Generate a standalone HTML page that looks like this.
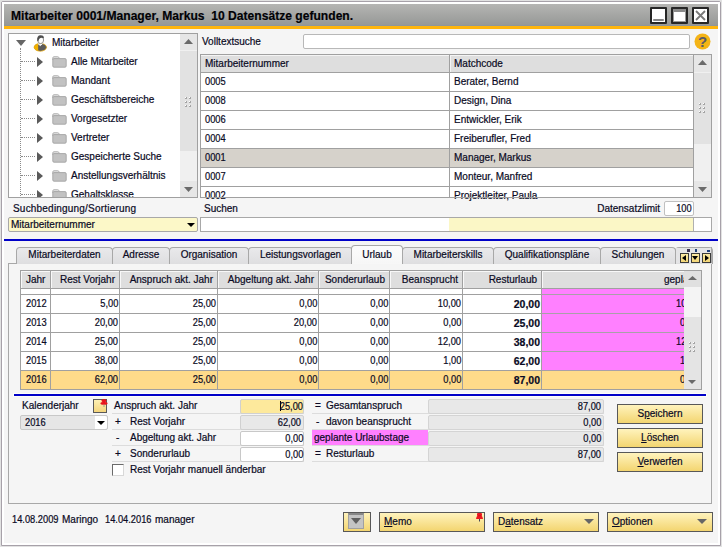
<!DOCTYPE html><html><head><meta charset="utf-8"><style>
*{box-sizing:border-box;margin:0;padding:0}
html,body{width:722px;height:547px;overflow:hidden;background:#e2e2e2;font-family:"Liberation Sans",sans-serif;font-size:10px;color:#0a0a24;-webkit-text-stroke:0.2px #0a0a24}
div,svg{position:absolute}
.t{white-space:nowrap;line-height:12px}
.r{text-align:right}
.b{font-weight:bold}
.box{border:1px solid #a0a0a0;background:#fff}
.hl{height:1px;background:#a0a0a0}
.vl{width:1px;background:#a0a0a0}
.tab{height:17px;border:1px solid #a8a8a8;border-bottom:none;border-radius:4px 4px 0 0;background:linear-gradient(#e9e9eb,#dedee0);text-align:center;line-height:12px;padding-top:1px;white-space:nowrap}
.btn{border:1px solid #585858;background:linear-gradient(#fff3bd,#f3d570);line-height:17px;white-space:nowrap}
.u{text-decoration:underline}
.n{transform:scaleX(0.93);transform-origin:100% 0}
.nl{transform:scaleX(0.93);transform-origin:0 0}
.grip{width:6px;height:9px;background:radial-gradient(circle at 1px 1px,#a8a8a8 0.9px,transparent 1.1px) 0 0/4px 4px}
</style></head><body>
<div style="left:1px;top:1px;width:720px;height:545px;border:1px solid #a7a1a9;background:#f5f5f5;border-radius:2px 2px 0 0"></div>
<div style="left:2px;top:2px;width:718px;height:543px;border:2px solid #fff"></div>
<div style="left:4px;top:4px;width:714px;height:22px;background:linear-gradient(#b5b5b3,#959795)"></div>
<div style="left:4px;top:25px;width:714px;height:1px;background:#8f969a"></div>
<div style="left:4px;top:26px;width:714px;height:3px;background:#ffb50d"></div>
<div class="t" style="left:11px;top:9px;font-weight:bold;font-size:12.1px;color:#000;line-height:15px">Mitarbeiter 0001/Manager, Markus&nbsp; 10 Datensätze gefunden.</div>
<div style="left:650px;top:7px;width:17px;height:17px;border:2px solid #262626;background:#fff;border-radius:1px"></div>
<div style="left:671px;top:7px;width:17px;height:17px;border:2px solid #262626;background:#fff;border-radius:1px"></div>
<div style="left:692px;top:7px;width:17px;height:17px;border:2px solid #262626;background:#fff;border-radius:1px"></div>
<div style="left:653px;top:19px;width:11px;height:2px;background:#858585;border-radius:1px"></div>
<div style="left:673px;top:9px;width:13px;height:13px;border:1px solid #999;border-top:3px solid #8a8a8a;background:#fff"></div>
<svg style="left:695px;top:10px" width="11" height="11"><path d="M1 1L10 10M10 1L1 10" stroke="#7a7a7a" stroke-width="1.8"/></svg>
<div style="left:8px;top:33px;width:190px;height:165px;border:1px solid #a0a0a0;background:#fff"></div>
<div style="left:180px;top:34px;width:17px;height:163px;background:#f0f0f0"></div>
<div style="left:180px;top:34px;width:17px;height:16px;background:#e6e6e6"></div>
<div style="left:180px;top:51px;width:17px;height:100px;background:#e2e2e2"></div>
<div style="left:180px;top:181px;width:17px;height:16px;background:#e6e6e6"></div>
<svg style="left:184px;top:39px" width="9" height="5"><path d="M0 5H9L4.5 0Z" fill="#6a6a6a"/></svg>
<svg style="left:184px;top:187px" width="9" height="5"><path d="M0 0H9L4.5 5Z" fill="#6a6a6a"/></svg>
<svg style="left:185px;top:97px" width="6" height="10"><rect x="0" y="0" width="2" height="2" fill="#a4a4a4"/><rect x="0" y="0" width="1" height="1" fill="#fff"/><rect x="4" y="0" width="2" height="2" fill="#a4a4a4"/><rect x="4" y="0" width="1" height="1" fill="#fff"/><rect x="0" y="4" width="2" height="2" fill="#a4a4a4"/><rect x="0" y="4" width="1" height="1" fill="#fff"/><rect x="4" y="4" width="2" height="2" fill="#a4a4a4"/><rect x="4" y="4" width="1" height="1" fill="#fff"/><rect x="0" y="8" width="2" height="2" fill="#a4a4a4"/><rect x="0" y="8" width="1" height="1" fill="#fff"/><rect x="4" y="8" width="2" height="2" fill="#a4a4a4"/><rect x="4" y="8" width="1" height="1" fill="#fff"/></svg>
<div style="left:9px;top:34px;width:171px;height:163px;overflow:hidden">
<svg style="left:7px;top:6px" width="10" height="6"><path d="M0 0H10L5.0 6Z" fill="#666"/></svg>
<div style="left:11px;top:14px;width:1px;height:160px;border-left:1px dotted #8a8a8a"></div>
<svg style="left:24px;top:0px" width="15" height="18"><defs><clipPath id="cl"><rect x="0" y="0" width="5.2" height="18"/></clipPath></defs><ellipse cx="7.3" cy="13.3" rx="6.2" ry="3.9" fill="#5c5c5c" stroke="#e9a800" stroke-width="0.7"/><ellipse cx="7.3" cy="13.3" rx="6.2" ry="3.9" fill="#f2b000" clip-path="url(#cl)"/><path d="M5 9.6L7.3 11.6 9.6 9.6" fill="#fff" stroke="#fff"/><ellipse cx="7.6" cy="6" rx="3" ry="3.6" fill="#fff" stroke="#777" stroke-width="0.8"/><path d="M4.3 6.8Q3.6 1.2 7.6 1.2Q11.4 1.2 10.8 4.6Q8.6 3 6.6 4.4Q5.6 5.2 5.3 7.6Z" fill="#4e4e4e"/></svg>
<div class="t" style="left:43px;top:3px;">Mitarbeiter</div>
<div style="left:12px;top:27px;width:14px;height:1px;border-top:1px dotted #8a8a8a"></div>
<svg style="left:28px;top:23px" width="6" height="10"><path d="M0 0V10L6 5.0Z" fill="#5a5a5a"/></svg>
<svg style="left:43px;top:22px" width="15" height="12"><path d="M0.8 4V2Q0.8 0.8 2 0.8H5.8Q6.8 0.8 7 1.8L7.2 2.6" fill="none" stroke="#9e9e9e" stroke-width="0.9"/><path d="M1.6 1.6H6V2.8H1.6Z" fill="#c4c4c4"/><rect x="0.8" y="2.6" width="13.4" height="8.6" rx="1.2" fill="#c2c2c2" stroke="#a4a4a4" stroke-width="0.9"/></svg>
<div class="t" style="left:62px;top:22px;">Alle Mitarbeiter</div>
<div style="left:12px;top:46px;width:14px;height:1px;border-top:1px dotted #8a8a8a"></div>
<svg style="left:28px;top:42px" width="6" height="10"><path d="M0 0V10L6 5.0Z" fill="#5a5a5a"/></svg>
<svg style="left:43px;top:41px" width="15" height="12"><path d="M0.8 4V2Q0.8 0.8 2 0.8H5.8Q6.8 0.8 7 1.8L7.2 2.6" fill="none" stroke="#9e9e9e" stroke-width="0.9"/><path d="M1.6 1.6H6V2.8H1.6Z" fill="#c4c4c4"/><rect x="0.8" y="2.6" width="13.4" height="8.6" rx="1.2" fill="#c2c2c2" stroke="#a4a4a4" stroke-width="0.9"/></svg>
<div class="t" style="left:62px;top:41px;">Mandant</div>
<div style="left:12px;top:65px;width:14px;height:1px;border-top:1px dotted #8a8a8a"></div>
<svg style="left:28px;top:61px" width="6" height="10"><path d="M0 0V10L6 5.0Z" fill="#5a5a5a"/></svg>
<svg style="left:43px;top:60px" width="15" height="12"><path d="M0.8 4V2Q0.8 0.8 2 0.8H5.8Q6.8 0.8 7 1.8L7.2 2.6" fill="none" stroke="#9e9e9e" stroke-width="0.9"/><path d="M1.6 1.6H6V2.8H1.6Z" fill="#c4c4c4"/><rect x="0.8" y="2.6" width="13.4" height="8.6" rx="1.2" fill="#c2c2c2" stroke="#a4a4a4" stroke-width="0.9"/></svg>
<div class="t" style="left:62px;top:60px;">Geschäftsbereiche</div>
<div style="left:12px;top:84px;width:14px;height:1px;border-top:1px dotted #8a8a8a"></div>
<svg style="left:28px;top:80px" width="6" height="10"><path d="M0 0V10L6 5.0Z" fill="#5a5a5a"/></svg>
<svg style="left:43px;top:79px" width="15" height="12"><path d="M0.8 4V2Q0.8 0.8 2 0.8H5.8Q6.8 0.8 7 1.8L7.2 2.6" fill="none" stroke="#9e9e9e" stroke-width="0.9"/><path d="M1.6 1.6H6V2.8H1.6Z" fill="#c4c4c4"/><rect x="0.8" y="2.6" width="13.4" height="8.6" rx="1.2" fill="#c2c2c2" stroke="#a4a4a4" stroke-width="0.9"/></svg>
<div class="t" style="left:62px;top:79px;">Vorgesetzter</div>
<div style="left:12px;top:103px;width:14px;height:1px;border-top:1px dotted #8a8a8a"></div>
<svg style="left:28px;top:99px" width="6" height="10"><path d="M0 0V10L6 5.0Z" fill="#5a5a5a"/></svg>
<svg style="left:43px;top:98px" width="15" height="12"><path d="M0.8 4V2Q0.8 0.8 2 0.8H5.8Q6.8 0.8 7 1.8L7.2 2.6" fill="none" stroke="#9e9e9e" stroke-width="0.9"/><path d="M1.6 1.6H6V2.8H1.6Z" fill="#c4c4c4"/><rect x="0.8" y="2.6" width="13.4" height="8.6" rx="1.2" fill="#c2c2c2" stroke="#a4a4a4" stroke-width="0.9"/></svg>
<div class="t" style="left:62px;top:98px;">Vertreter</div>
<div style="left:12px;top:122px;width:14px;height:1px;border-top:1px dotted #8a8a8a"></div>
<svg style="left:28px;top:118px" width="6" height="10"><path d="M0 0V10L6 5.0Z" fill="#5a5a5a"/></svg>
<svg style="left:43px;top:117px" width="15" height="12"><path d="M0.8 4V2Q0.8 0.8 2 0.8H5.8Q6.8 0.8 7 1.8L7.2 2.6" fill="none" stroke="#9e9e9e" stroke-width="0.9"/><path d="M1.6 1.6H6V2.8H1.6Z" fill="#c4c4c4"/><rect x="0.8" y="2.6" width="13.4" height="8.6" rx="1.2" fill="#c2c2c2" stroke="#a4a4a4" stroke-width="0.9"/></svg>
<div class="t" style="left:62px;top:117px;">Gespeicherte Suche</div>
<div style="left:12px;top:141px;width:14px;height:1px;border-top:1px dotted #8a8a8a"></div>
<svg style="left:28px;top:137px" width="6" height="10"><path d="M0 0V10L6 5.0Z" fill="#5a5a5a"/></svg>
<svg style="left:43px;top:136px" width="15" height="12"><path d="M0.8 4V2Q0.8 0.8 2 0.8H5.8Q6.8 0.8 7 1.8L7.2 2.6" fill="none" stroke="#9e9e9e" stroke-width="0.9"/><path d="M1.6 1.6H6V2.8H1.6Z" fill="#c4c4c4"/><rect x="0.8" y="2.6" width="13.4" height="8.6" rx="1.2" fill="#c2c2c2" stroke="#a4a4a4" stroke-width="0.9"/></svg>
<div class="t" style="left:62px;top:136px;">Anstellungsverhältnis</div>
<div style="left:12px;top:160px;width:14px;height:1px;border-top:1px dotted #8a8a8a"></div>
<svg style="left:28px;top:156px" width="6" height="10"><path d="M0 0V10L6 5.0Z" fill="#5a5a5a"/></svg>
<svg style="left:43px;top:155px" width="15" height="12"><path d="M0.8 4V2Q0.8 0.8 2 0.8H5.8Q6.8 0.8 7 1.8L7.2 2.6" fill="none" stroke="#9e9e9e" stroke-width="0.9"/><path d="M1.6 1.6H6V2.8H1.6Z" fill="#c4c4c4"/><rect x="0.8" y="2.6" width="13.4" height="8.6" rx="1.2" fill="#c2c2c2" stroke="#a4a4a4" stroke-width="0.9"/></svg>
<div class="t" style="left:62px;top:155px;">Gehaltsklasse</div>
</div>
<div class="t" style="left:202px;top:36px;">Volltextsuche</div>
<div style="left:303px;top:34px;width:387px;height:15px;border:1px solid #b8b8b8;background:#fff;border-radius:2px"></div>
<svg style="left:694px;top:33px" width="17" height="17"><circle cx="8.5" cy="8.5" r="8" fill="#f4b417"/><text x="8.6" y="14" text-anchor="middle" font-family="Liberation Sans" font-weight="bold" font-size="15" fill="#5a5a68" style="-webkit-text-stroke:0">?</text></svg>
<div style="left:200px;top:54px;width:512px;height:144px;border:1px solid #a0a0a0;background:#fff"></div>
<div style="left:201px;top:55px;width:493px;height:17px;background:#dedede;border-top:1px solid #f4f4f4"></div>
<div style="left:450px;top:55px;width:1px;height:17px;background:#f4f4f4"></div>
<div style="left:449px;top:55px;width:1px;height:142px;background:#a0a0a0"></div>
<div style="left:201px;top:72px;width:493px;height:1px;background:#a0a0a0"></div>
<div class="t" style="left:205px;top:58px;">Mitarbeiternummer</div>
<div class="t" style="left:454px;top:58px;">Matchcode</div>
<div style="left:201px;top:91px;width:493px;height:1px;background:#a0a0a0"></div>
<div class="t" style="left:205px;top:76px;transform:scaleX(0.93);transform-origin:0 0">0005</div>
<div class="t" style="left:454px;top:76px;">Berater, Bernd</div>
<div style="left:201px;top:110px;width:493px;height:1px;background:#a0a0a0"></div>
<div class="t" style="left:205px;top:95px;transform:scaleX(0.93);transform-origin:0 0">0008</div>
<div class="t" style="left:454px;top:95px;">Design, Dina</div>
<div style="left:201px;top:129px;width:493px;height:1px;background:#a0a0a0"></div>
<div class="t" style="left:205px;top:114px;transform:scaleX(0.93);transform-origin:0 0">0006</div>
<div class="t" style="left:454px;top:114px;">Entwickler, Erik</div>
<div style="left:201px;top:148px;width:493px;height:1px;background:#a0a0a0"></div>
<div class="t" style="left:205px;top:133px;transform:scaleX(0.93);transform-origin:0 0">0004</div>
<div class="t" style="left:454px;top:133px;">Freiberufler, Fred</div>
<div style="left:201px;top:149px;width:493px;height:18px;background:#d6d2cb"></div>
<div style="left:449px;top:149px;width:1px;height:18px;background:#a0a0a0"></div>
<div style="left:201px;top:167px;width:493px;height:1px;background:#a0a0a0"></div>
<div class="t" style="left:205px;top:152px;transform:scaleX(0.93);transform-origin:0 0">0001</div>
<div class="t" style="left:454px;top:152px;">Manager, Markus</div>
<div style="left:201px;top:186px;width:493px;height:1px;background:#a0a0a0"></div>
<div class="t" style="left:205px;top:171px;transform:scaleX(0.93);transform-origin:0 0">0007</div>
<div class="t" style="left:454px;top:171px;">Monteur, Manfred</div>
<div class="t" style="left:205px;top:190px;transform:scaleX(0.93);transform-origin:0 0">0002</div>
<div class="t" style="left:454px;top:190px;">Projektleiter, Paula</div>
<div style="left:201px;top:197px;width:510px;height:1px;background:#a0a0a0"></div>
<div style="left:693px;top:55px;width:1px;height:142px;background:#a0a0a0"></div>
<div style="left:694px;top:55px;width:17px;height:142px;background:#f0f0f0"></div>
<div style="left:694px;top:55px;width:17px;height:17px;background:#e6e6e6"></div>
<div style="left:694px;top:73px;width:17px;height:71px;background:#e2e2e2"></div>
<div style="left:694px;top:181px;width:17px;height:16px;background:#e6e6e6"></div>
<svg style="left:698px;top:60px" width="9" height="5"><path d="M0 5H9L4.5 0Z" fill="#6a6a6a"/></svg>
<svg style="left:698px;top:187px" width="9" height="5"><path d="M0 0H9L4.5 5Z" fill="#6a6a6a"/></svg>
<svg style="left:699px;top:103px" width="6" height="10"><rect x="0" y="0" width="2" height="2" fill="#a4a4a4"/><rect x="0" y="0" width="1" height="1" fill="#fff"/><rect x="4" y="0" width="2" height="2" fill="#a4a4a4"/><rect x="4" y="0" width="1" height="1" fill="#fff"/><rect x="0" y="4" width="2" height="2" fill="#a4a4a4"/><rect x="0" y="4" width="1" height="1" fill="#fff"/><rect x="4" y="4" width="2" height="2" fill="#a4a4a4"/><rect x="4" y="4" width="1" height="1" fill="#fff"/><rect x="0" y="8" width="2" height="2" fill="#a4a4a4"/><rect x="0" y="8" width="1" height="1" fill="#fff"/><rect x="4" y="8" width="2" height="2" fill="#a4a4a4"/><rect x="4" y="8" width="1" height="1" fill="#fff"/></svg>
<div class="t" style="left:13px;top:203px;letter-spacing:0.2px">Suchbedingung/Sortierung</div>
<div style="left:8px;top:217px;width:190px;height:15px;border:1px solid #a8a8a8;background:#fcf8c8;border-radius:2px"></div>
<div class="t" style="left:11px;top:219px;">Mitarbeiternummer</div>
<svg style="left:187px;top:223px" width="8" height="4"><path d="M0 0H8L4.0 4Z" fill="#000"/></svg>
<div class="t" style="left:204px;top:203px;">Suchen</div>
<div class="t" style="right:62px;top:203px;">Datensatzlimit</div>
<div style="left:664px;top:201px;width:30px;height:15px;border:1px solid #c0c0c0;background:#fff;border-radius:2px"></div>
<div class="t" style="right:30px;top:203px;transform:scaleX(0.93);transform-origin:100% 0">100</div>
<div style="left:200px;top:217px;width:512px;height:15px;border:1px solid #a8a8a8;background:#fff"></div>
<div style="left:449px;top:218px;width:244px;height:13px;background:#fbf7c6"></div>
<div style="left:693px;top:218px;width:1px;height:13px;background:#b0b0b0"></div>
<div style="left:4px;top:239px;width:714px;height:2px;background:#0000c8"></div>
<div style="left:8px;top:263px;width:704px;height:241px;border:1px solid #a8a8a8;border-top:none"></div>
<div style="left:8px;top:263px;width:704px;height:1px;background:#a8a8a8"></div>
<div class="tab" style="left:16px;top:247px;width:97px">Mitarbeiterdaten</div>
<div class="tab" style="left:112px;top:247px;width:58px">Adresse</div>
<div class="tab" style="left:169px;top:247px;width:80px">Organisation</div>
<div class="tab" style="left:248px;top:247px;width:105px">Leistungsvorlagen</div>
<div class="tab" style="left:402px;top:247px;width:92px">Mitarbeiterskills</div>
<div class="tab" style="left:493px;top:247px;width:108px">Qualifikationspläne</div>
<div class="tab" style="left:600px;top:247px;width:76px">Schulungen</div>
<div class="tab" style="left:675px;top:247px;width:38px"></div>
<div class="tab" style="left:351px;top:245px;width:52px;height:19px;background:linear-gradient(#fcfcfc,#f6f6f6);line-height:12px;padding-top:3px;border-bottom:none">Urlaub</div>
<div style="left:352px;top:263px;width:50px;height:1px;background:#f7f7f7"></div>
<div style="left:676px;top:248px;width:35px;height:15px;background:#e4e4e6"></div>
<div style="left:711px;top:247px;width:1px;height:16px;background:#a8a8a8"></div>
<div style="left:687px;top:249px;width:3px;height:3px;background:#3a3050"></div>
<div style="left:695px;top:249px;width:2px;height:3px;background:#20407a"></div>
<div style="left:707px;top:250px;width:3px;height:2px;background:#20407a"></div>
<div style="left:680px;top:253px;width:9px;height:10px;border:1px solid #3a3a3a;background:linear-gradient(#fbeaa4,#f3d677)"></div>
<svg style="left:682px;top:255px" width="4" height="6"><path d="M4 0V6L0 3.0Z" fill="#000"/></svg>
<div style="left:691px;top:253px;width:9px;height:10px;border:1px solid #3a3a3a;background:linear-gradient(#fbeaa4,#f3d677)"></div>
<svg style="left:692px;top:256px" width="6" height="4"><path d="M0 0H6L3.0 4Z" fill="#000"/></svg>
<div style="left:702px;top:253px;width:9px;height:10px;border:1px solid #3a3a3a;background:linear-gradient(#fbeaa4,#f3d677)"></div>
<svg style="left:705px;top:255px" width="4" height="6"><path d="M0 0V6L4 3.0Z" fill="#000"/></svg>
<div style="left:20px;top:270px;width:682px;height:120px;border:1px solid #a0a0a0;background:#fff"></div>
<div style="left:21px;top:271px;width:663px;height:17px;background:#dedede"></div>
<div style="left:21px;top:288px;width:680px;height:1px;background:#a0a0a0"></div>
<div style="left:21px;top:271px;width:1px;height:17px;background:#f8f8f8"></div>
<div style="left:51px;top:271px;width:1px;height:17px;background:#f8f8f8"></div>
<div style="left:120px;top:271px;width:1px;height:17px;background:#f8f8f8"></div>
<div style="left:218px;top:271px;width:1px;height:17px;background:#f8f8f8"></div>
<div style="left:319px;top:271px;width:1px;height:17px;background:#f8f8f8"></div>
<div style="left:390px;top:271px;width:1px;height:17px;background:#f8f8f8"></div>
<div style="left:463px;top:271px;width:1px;height:17px;background:#f8f8f8"></div>
<div style="left:542px;top:271px;width:1px;height:17px;background:#f8f8f8"></div>
<div style="left:21px;top:271px;width:663px;height:1px;background:#f8f8f8"></div>
<div class="t" style="left:26px;top:274px;">Jahr</div>
<div class="t" style="right:607px;top:274px;">Rest Vorjahr</div>
<div class="t" style="right:509px;top:274px;">Anspruch akt. Jahr</div>
<div class="t" style="right:408px;top:274px;">Abgeltung akt. Jahr</div>
<div class="t" style="right:337px;top:274px;">Sonderurlaub</div>
<div class="t" style="right:264px;top:274px;">Beansprucht</div>
<div class="t" style="right:185px;top:274px;">Resturlaub</div>
<div style="left:542px;top:271px;width:142px;height:17px;overflow:hidden"><div class="t" style="left:122px;top:3px">geplante Urlaubstage</div></div>
<div style="left:542px;top:289px;width:142px;height:100px;background:#ff80ff"></div>
<div style="left:21px;top:371px;width:663px;height:18px;background:#fedb8a"></div>
<div style="left:21px;top:294px;width:520px;height:1px;background:#a0a0a0"></div>
<div style="left:541px;top:294px;width:143px;height:1px;background:#a8a0a8"></div>
<div style="left:21px;top:313px;width:520px;height:1px;background:#a0a0a0"></div>
<div style="left:541px;top:313px;width:143px;height:1px;background:#a8a0a8"></div>
<div style="left:21px;top:332px;width:520px;height:1px;background:#a0a0a0"></div>
<div style="left:541px;top:332px;width:143px;height:1px;background:#a8a0a8"></div>
<div style="left:21px;top:351px;width:520px;height:1px;background:#a0a0a0"></div>
<div style="left:541px;top:351px;width:143px;height:1px;background:#a8a0a8"></div>
<div style="left:21px;top:370px;width:520px;height:1px;background:#a0a0a0"></div>
<div style="left:541px;top:370px;width:143px;height:1px;background:#a8a0a8"></div>
<div style="left:21px;top:389px;width:680px;height:1px;background:#a0a0a0"></div>
<div style="left:50px;top:271px;width:1px;height:118px;background:#a0a0a0"></div>
<div style="left:119px;top:271px;width:1px;height:118px;background:#a0a0a0"></div>
<div style="left:217px;top:271px;width:1px;height:118px;background:#a0a0a0"></div>
<div style="left:318px;top:271px;width:1px;height:118px;background:#a0a0a0"></div>
<div style="left:389px;top:271px;width:1px;height:118px;background:#a0a0a0"></div>
<div style="left:462px;top:271px;width:1px;height:118px;background:#a0a0a0"></div>
<div style="left:541px;top:271px;width:1px;height:118px;background:#a0a0a0"></div>
<div style="left:21px;top:289px;width:663px;height:100px;overflow:hidden">
<div class="t" style="left:5px;top:9px;transform:scaleX(0.93);transform-origin:0 0">2012</div>
<div class="t n" style="right:566px;top:9px">5,00</div>
<div class="t n" style="right:468px;top:9px">25,00</div>
<div class="t n" style="right:367px;top:9px">0,00</div>
<div class="t n" style="right:296px;top:9px">0,00</div>
<div class="t n" style="right:223px;top:9px">10,00</div>
<div class="t b" style="right:144px;top:9px;font-size:10.5px">20,00</div>
<div class="t nl" style="left:655px;top:9px">10,00</div>
<div class="t" style="left:5px;top:28px;transform:scaleX(0.93);transform-origin:0 0">2013</div>
<div class="t n" style="right:566px;top:28px">20,00</div>
<div class="t n" style="right:468px;top:28px">25,00</div>
<div class="t n" style="right:367px;top:28px">20,00</div>
<div class="t n" style="right:296px;top:28px">0,00</div>
<div class="t n" style="right:223px;top:28px">0,00</div>
<div class="t b" style="right:144px;top:28px;font-size:10.5px">25,00</div>
<div class="t nl" style="left:659px;top:28px">0,00</div>
<div class="t" style="left:5px;top:47px;transform:scaleX(0.93);transform-origin:0 0">2014</div>
<div class="t n" style="right:566px;top:47px">25,00</div>
<div class="t n" style="right:468px;top:47px">25,00</div>
<div class="t n" style="right:367px;top:47px">0,00</div>
<div class="t n" style="right:296px;top:47px">0,00</div>
<div class="t n" style="right:223px;top:47px">12,00</div>
<div class="t b" style="right:144px;top:47px;font-size:10.5px">38,00</div>
<div class="t nl" style="left:655px;top:47px">12,00</div>
<div class="t" style="left:5px;top:66px;transform:scaleX(0.93);transform-origin:0 0">2015</div>
<div class="t n" style="right:566px;top:66px">38,00</div>
<div class="t n" style="right:468px;top:66px">25,00</div>
<div class="t n" style="right:367px;top:66px">0,00</div>
<div class="t n" style="right:296px;top:66px">0,00</div>
<div class="t n" style="right:223px;top:66px">1,00</div>
<div class="t b" style="right:144px;top:66px;font-size:10.5px">62,00</div>
<div class="t nl" style="left:659px;top:66px">1,00</div>
<div class="t" style="left:5px;top:85px;transform:scaleX(0.93);transform-origin:0 0">2016</div>
<div class="t n" style="right:566px;top:85px">62,00</div>
<div class="t n" style="right:468px;top:85px">25,00</div>
<div class="t n" style="right:367px;top:85px">0,00</div>
<div class="t n" style="right:296px;top:85px">0,00</div>
<div class="t n" style="right:223px;top:85px">0,00</div>
<div class="t b" style="right:144px;top:85px;font-size:10.5px">87,00</div>
<div class="t nl" style="left:659px;top:85px">0,00</div>
</div>
<div style="left:684px;top:271px;width:17px;height:118px;background:#e4e4e4"></div>
<div style="left:684px;top:271px;width:17px;height:16px;background:#e0e0e0"></div>
<div style="left:684px;top:287px;width:17px;height:30px;background:#f4f4f4"></div>
<svg style="left:688px;top:276px" width="9" height="4"><path d="M0 4H9L4.5 0Z" fill="#6a6a6a"/></svg>
<svg style="left:688px;top:380px" width="8" height="4"><path d="M0 0H8L4.0 4Z" fill="#6a6a6a"/></svg>
<svg style="left:689px;top:342px" width="6" height="10"><rect x="0" y="0" width="2" height="2" fill="#a4a4a4"/><rect x="0" y="0" width="1" height="1" fill="#fff"/><rect x="4" y="0" width="2" height="2" fill="#a4a4a4"/><rect x="4" y="0" width="1" height="1" fill="#fff"/><rect x="0" y="4" width="2" height="2" fill="#a4a4a4"/><rect x="0" y="4" width="1" height="1" fill="#fff"/><rect x="4" y="4" width="2" height="2" fill="#a4a4a4"/><rect x="4" y="4" width="1" height="1" fill="#fff"/><rect x="0" y="8" width="2" height="2" fill="#a4a4a4"/><rect x="0" y="8" width="1" height="1" fill="#fff"/><rect x="4" y="8" width="2" height="2" fill="#a4a4a4"/><rect x="4" y="8" width="1" height="1" fill="#fff"/></svg>
<div style="left:13px;top:393px;width:694px;height:4px;background:#fdfdfa"></div>
<div style="left:14px;top:394px;width:692px;height:2px;background:#0000c8"></div>
<div class="t" style="left:22px;top:400px;">Kalenderjahr</div>
<svg style="left:93px;top:399px" width="15" height="14"><defs><linearGradient id="ng" x1="0" y1="0" x2="0" y2="1"><stop offset="0" stop-color="#fdf1b6"/><stop offset="1" stop-color="#f4d47a"/></linearGradient></defs><rect x="0.5" y="0.5" width="13" height="13" fill="url(#ng)" stroke="#5a5a5a"/><ellipse cx="11" cy="1.6" rx="2.6" ry="1.6" fill="#e8141e"/><rect x="9.6" y="2" width="2.8" height="2" fill="#e8141e"/><ellipse cx="11" cy="4.4" rx="3.6" ry="1.3" fill="#e8141e"/><path d="M11 5.5V8" stroke="#888" stroke-width="0.8"/></svg>
<div style="left:20px;top:415px;width:88px;height:15px;border:1px solid #c8c8c8;background:#e6e6e6;border-radius:2px"></div>
<div style="left:95px;top:416px;width:12px;height:13px;background:#fff;border-radius:0 2px 2px 0"></div>
<svg style="left:97px;top:421px" width="8" height="4"><path d="M0 0H8L4.0 4Z" fill="#000"/></svg>
<div class="t" style="left:25px;top:417px;transform:scaleX(0.93);transform-origin:0 0">2016</div>
<div style="left:112px;top:413px;width:192px;height:1px;background:#dcdcdc"></div>
<div style="left:312px;top:413px;width:292px;height:1px;background:#dcdcdc"></div>
<div style="left:112px;top:429px;width:192px;height:1px;background:#dcdcdc"></div>
<div style="left:312px;top:429px;width:292px;height:1px;background:#dcdcdc"></div>
<div style="left:112px;top:445px;width:192px;height:1px;background:#dcdcdc"></div>
<div style="left:312px;top:445px;width:292px;height:1px;background:#dcdcdc"></div>
<div style="left:112px;top:461px;width:192px;height:1px;background:#dcdcdc"></div>
<div style="left:312px;top:461px;width:292px;height:1px;background:#dcdcdc"></div>
<div class="t" style="left:114px;top:400px;">Anspruch akt. Jahr</div>
<div class="t" style="left:115px;top:416px;">+</div>
<div class="t" style="left:130px;top:416px;">Rest Vorjahr</div>
<div class="t" style="left:116px;top:432px;">-</div>
<div class="t" style="left:130px;top:432px;">Abgeltung akt. Jahr</div>
<div class="t" style="left:115px;top:448px;">+</div>
<div class="t" style="left:130px;top:448px;">Sonderurlaub</div>
<div style="left:240px;top:399px;width:64px;height:15px;border:1px solid #d0d0d0;background:#fde99c;border-radius:2px"></div>
<div style="left:280px;top:401px;width:1px;height:10px;background:#000"></div>
<div class="t" style="right:419px;top:401px;transform:scaleX(0.93);transform-origin:100% 0">25,00</div>
<div style="left:240px;top:415px;width:64px;height:15px;border:1px solid #d0d0d0;background:#e8e8e8;border-radius:2px"></div>
<div class="t" style="right:421px;top:417px;transform:scaleX(0.93);transform-origin:100% 0">62,00</div>
<div style="left:240px;top:431px;width:64px;height:15px;border:1px solid #c8c8c8;background:#fff;border-radius:2px"></div>
<div class="t" style="right:419px;top:433px;transform:scaleX(0.93);transform-origin:100% 0">0,00</div>
<div style="left:240px;top:447px;width:64px;height:15px;border:1px solid #c8c8c8;background:#fff;border-radius:2px"></div>
<div class="t" style="right:419px;top:449px;transform:scaleX(0.93);transform-origin:100% 0">0,00</div>
<div style="left:112px;top:464px;width:12px;height:12px;border:1px solid #6a6a6a;background:#fff;border-right-color:#d8d8d8;border-bottom-color:#d8d8d8"></div>
<div class="t" style="left:130px;top:464px;">Rest Vorjahr manuell änderbar</div>
<div class="t" style="left:315px;top:400px;">=</div>
<div class="t" style="left:326px;top:400px;">Gesamtanspruch</div>
<div class="t" style="left:316px;top:416px;">-</div>
<div class="t" style="left:326px;top:416px;">davon beansprucht</div>
<div style="left:312px;top:430px;width:116px;height:15px;background:#ff80ff"></div>
<div class="t" style="left:314px;top:432px;">geplante Urlaubstage</div>
<div class="t" style="left:315px;top:448px;">=</div>
<div class="t" style="left:326px;top:448px;">Resturlaub</div>
<div style="left:428px;top:399px;width:176px;height:15px;border:1px solid #d4d4d4;background:#e8e8e8;border-radius:2px"></div>
<div class="t" style="right:121px;top:401px;transform:scaleX(0.93);transform-origin:100% 0">87,00</div>
<div style="left:428px;top:415px;width:176px;height:15px;border:1px solid #d4d4d4;background:#e8e8e8;border-radius:2px"></div>
<div class="t" style="right:121px;top:417px;transform:scaleX(0.93);transform-origin:100% 0">0,00</div>
<div style="left:428px;top:431px;width:176px;height:15px;border:1px solid #d4d4d4;background:#e8e8e8;border-radius:2px"></div>
<div class="t" style="right:121px;top:433px;transform:scaleX(0.93);transform-origin:100% 0">0,00</div>
<div style="left:428px;top:447px;width:176px;height:15px;border:1px solid #d4d4d4;background:#e8e8e8;border-radius:2px"></div>
<div class="t" style="right:121px;top:449px;transform:scaleX(0.93);transform-origin:100% 0">87,00</div>
<div class="btn" style="left:617px;top:404px;width:86px;height:20px;text-align:center">S<span class="u">p</span>eichern</div>
<div class="btn" style="left:617px;top:428px;width:86px;height:20px;text-align:center"><span class="u">L</span>öschen</div>
<div class="btn" style="left:617px;top:452px;width:86px;height:20px;text-align:center"><span class="u">V</span>erwerfen</div>
<div class="t" style="left:12px;top:514px;transform:scaleX(0.93);transform-origin:0 0">14.08.2009</div>
<div class="t" style="left:62px;top:514px;">Maringo</div>
<div class="t" style="left:105px;top:514px;transform:scaleX(0.93);transform-origin:0 0">14.04.2016</div>
<div class="t" style="left:155px;top:514px;">manager</div>
<div class="btn" style="left:343px;top:512px;width:28px;height:20px"></div>
<div style="left:348px;top:513px;width:16px;height:16px;background:#c4c4c4;border:1px solid #a0a0a0;border-top:2px solid #888"></div>
<svg style="left:351px;top:518px" width="10" height="6"><path d="M0 0H10L5.0 6Z" fill="#606060"/></svg>
<div class="btn" style="left:379px;top:512px;width:106px;height:20px;padding-left:4px"><span class="u">M</span>emo</div>
<svg style="left:476px;top:513px" width="7" height="9"><rect x="1" y="0" width="5" height="3" rx="1" fill="#ee1820"/><path d="M0 6Q0.3 3.2 1.8 2.6H5.2Q6.7 3.2 7 6Z" fill="#ee1820"/><path d="M1.5 2.7H5.5" stroke="#b01018" stroke-width="0.5"/><path d="M3.5 6V8.5" stroke="#445" stroke-width="1"/></svg>
<div class="btn" style="left:493px;top:512px;width:106px;height:20px;padding-left:4px">D<span class="u">a</span>tensatz</div>
<svg style="left:584px;top:519px" width="10" height="5"><path d="M0 0H10L5.0 5Z" fill="#666"/></svg>
<div class="btn" style="left:607px;top:512px;width:106px;height:20px;padding-left:4px"><span class="u">O</span>ptionen</div>
<svg style="left:697px;top:519px" width="10" height="5"><path d="M0 0H10L5.0 5Z" fill="#666"/></svg>
</body></html>
